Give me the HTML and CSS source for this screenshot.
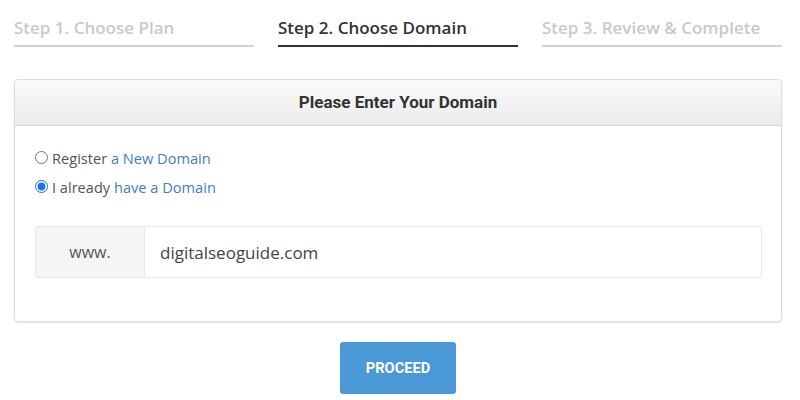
FILE: index.html
```html
<!DOCTYPE html>
<html>
<head>
<meta charset="utf-8">
<link rel="stylesheet" href="styles.css">
</head>
<body>
<div class="steps">
  <div class="step">Step 1. Choose Plan</div>
  <div class="step active">Step 2. Choose Domain</div>
  <div class="step">Step 3. Review &amp; Complete</div>
</div>
<div class="panel">
  <div class="panel-head">Please Enter Your Domain</div>
  <div class="panel-body">
    <label class="opt"><input type="radio" name="d"> Register&nbsp;<span class="lnk">a New Domain</span></label>
    <label class="opt"><input type="radio" name="d" checked> I already&nbsp;<span class="lnk">have a Domain</span></label>
    <div class="group">
      <div class="addon">www.</div>
      <div class="field">digitalseoguide.com</div>
    </div>
  </div>
</div>
<div class="actions">
  <button class="btn">PROCEED</button>
</div>
</body>
</html>
```
FILE: styles.css
```css
html, body { margin: 0; padding: 0; background: #fff; }
body { font-family: "Open Sans", "Liberation Sans", sans-serif; color: #555; }
.steps { display: flex; gap: 24px; padding: 17px 0 0 14px; }
.step { width: 240px; font-size: 17px; font-weight: 600; line-height: 22px; color: #c9c9c9; padding-bottom: 6px; border-bottom: 2px solid #d2d2d2; }
.step.active { color: #333; border-bottom-color: #333; }
.panel { margin: 32px 0 0 14px; width: 766px; border: 1px solid #dcdcdc; border-radius: 4px; box-shadow: 0 1px 2px rgba(0,0,0,0.12); }
.panel-head { height: 45px; line-height: 45px; text-align: center; font-family: Roboto, "Liberation Sans", sans-serif; font-weight: 700; font-size: 17px; color: #333; background: linear-gradient(#fafafa, #ececec); border-bottom: 1px solid #d4d4d4; border-radius: 4px 4px 0 0; }
.panel-body { padding: 17px 19px 43px 20px; }
.opt { display: flex; align-items: center; font-size: 14.6px; line-height: 22px; height: 29px; color: #555; }
.opt input { margin: 0 4px 0 0; width: 13px; height: 13px; accent-color: #1a73e8; }
.lnk { color: #3f7dc6; }
.group { display: flex; margin-top: 25px; height: 50px; border: 1px solid #eaeaea; border-radius: 2px; }
.addon { width: 108px; background: #f5f5f5; border-right: 1px solid #eaeaea; display: flex; align-items: center; justify-content: center; font-size: 16px; color: #555; }
.field { flex: 1; display: flex; align-items: center; padding-left: 15px; font-size: 17px; color: #444; }
.actions { display: flex; justify-content: center; margin-top: 20px; padding-right: 4px; }
.btn { width: 116px; height: 52px; border: none; border-radius: 3px; background: #4a98d6; color: #fff; font-family: Roboto, "Liberation Sans", sans-serif; font-weight: 700; font-size: 14.6px; }
```
